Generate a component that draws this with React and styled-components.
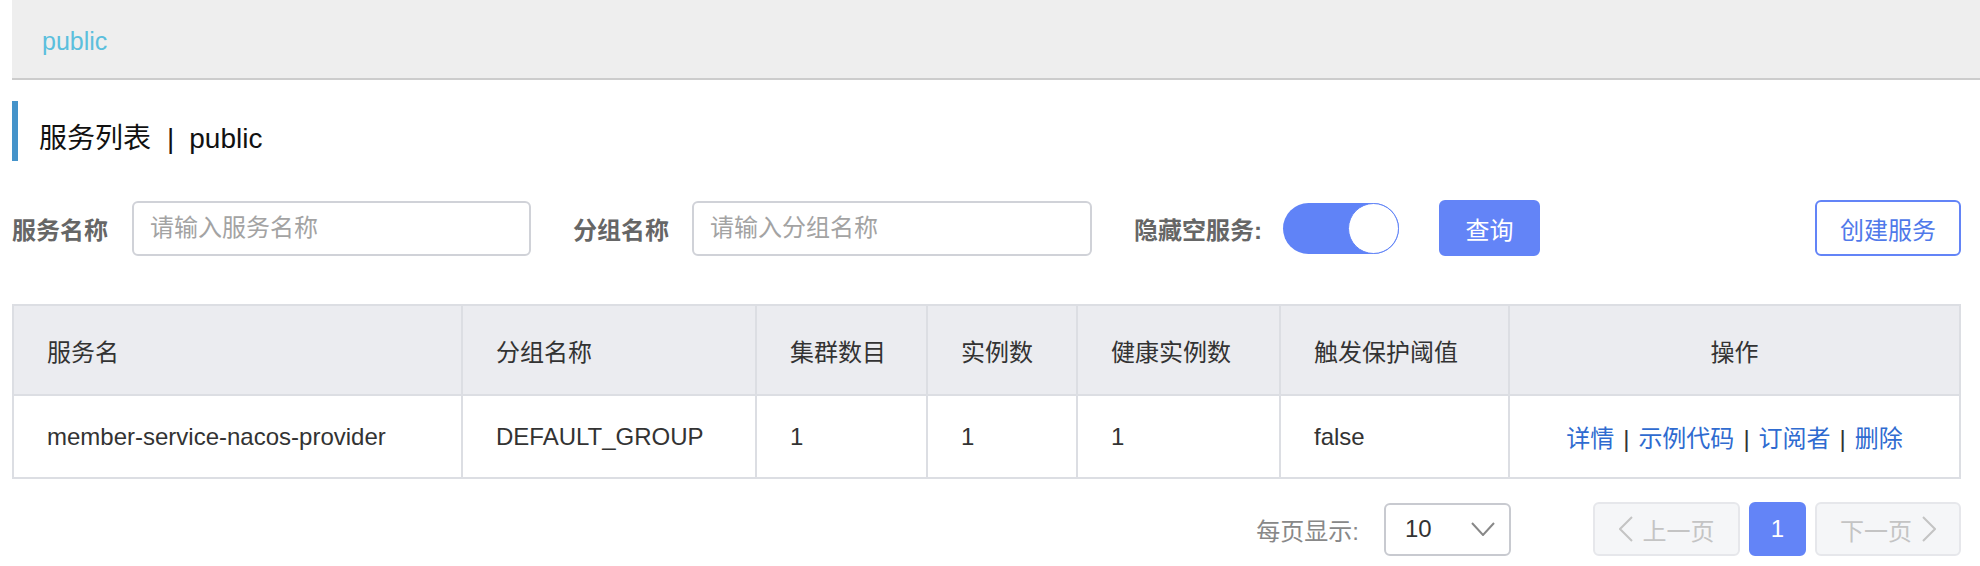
import React, { useState } from "react";
import styled, { createGlobalStyle } from "styled-components";

const GlobalStyle = createGlobalStyle`
  body {
    margin: 0;
    background: #fff;
    font-family: "Liberation Sans", "Noto Sans CJK SC", sans-serif;
    color: #333;
  }
`;

const Page = styled.div`
  padding: 0 19px 0 12px;
`;

const TopBar = styled.div`
  height: 74px;
  margin-right: -19px;
  padding: 4px 0 0 30px;
  display: flex;
  align-items: center;
  background: #eeeeee;
  border-bottom: 2px solid #cccccc;
  font-size: 25px;
  color: #5bbfdd;
`;

const Title = styled.h1`
  margin: 21px 0 0;
  height: 60px;
  box-sizing: border-box;
  padding: 16px 0 0 21px;
  border-left: 6px solid #4493ca;
  font-size: 28px;
  font-weight: normal;
  line-height: 44px;
  color: #111;
`;

const TitleBar = styled.span`
  display: inline-block;
  margin: 0 15px 0 16px;
  color: #111;
`;

const Filters = styled.div`
  margin-top: 39px;
  height: 56px;
  display: flex;
  align-items: center;
`;

const Label = styled.span`
  font-size: 24px;
  font-weight: bold;
  color: #666;
  margin: 0 ${(p) => p.gap || 24}px 0 ${(p) => p.lead || 0}px;
  white-space: nowrap;
`;

const Input = styled.input`
  box-sizing: border-box;
  width: ${(p) => p.w}px;
  height: 55px;
  padding: 0 16px;
  border: 2px solid #d0d2d8;
  border-radius: 6px;
  font: inherit;
  font-size: 24px;
  color: #333;
  outline: none;
  &::placeholder {
    color: #a3a3a3;
  }
`;

const Track = styled.div`
  width: 116px;
  height: 51px;
  border-radius: 26px;
  background: #6083f7;
  display: flex;
  align-items: center;
  justify-content: ${(p) => (p.on ? "flex-end" : "flex-start")};
  cursor: pointer;
`;

const Knob = styled.div`
  width: 49px;
  height: 49px;
  border-radius: 50%;
  background: #fff;
  border: 1px solid #6083f7;
`;

const Button = styled.button`
  box-sizing: border-box;
  height: 56px;
  width: ${(p) => p.w}px;
  margin-left: ${(p) => p.ml};
  border-radius: 6px;
  font: inherit;
  font-size: 24px;
  cursor: pointer;
  background: ${(p) => (p.primary ? "#6384f7" : "#fff")};
  color: ${(p) => (p.primary ? "#fff" : "#5079ea")};
  border: 2px solid #6384f7;
`;

const Table = styled.table`
  margin-top: 48px;
  width: 100%;
  table-layout: fixed;
  border-collapse: collapse;
  border: 2px solid #dcdee3;
  font-size: 24px;
`;

const Th = styled.th`
  height: 88px;
  padding: 0 0 0 33px;
  background: #ebecf0;
  border: 2px solid #dcdee3;
  font-weight: normal;
  color: #333;
  text-align: ${(p) => (p.center ? "center" : "left")};
  ${(p) => p.center && "padding: 0;"}
`;

const Td = styled.td`
  height: 81px;
  padding: 0 0 0 33px;
  border: 2px solid #dcdee3;
  color: #333;
  text-align: ${(p) => (p.center ? "center" : "left")};
  ${(p) => p.center && "padding: 0;"}
`;

const Link = styled.a`
  color: #2f6bd0;
  text-decoration: none;
  cursor: pointer;
`;

const Sep = styled.span`
  color: #333;
  margin: 0 9px;
`;

const Pager = styled.div`
  margin-top: 23px;
  display: flex;
  align-items: center;
  justify-content: flex-end;
  font-size: 24px;
`;

const PagerLabel = styled.span`
  color: #888;
  margin-right: 25px;
`;

const Select = styled.div`
  box-sizing: border-box;
  width: 127px;
  height: 53px;
  padding: 0 14px 0 19px;
  border: 2px solid #c8cad0;
  border-radius: 6px;
  display: flex;
  align-items: center;
  justify-content: space-between;
  color: #333;
  margin-right: 82px;
`;

const PageBtn = styled.div`
  box-sizing: border-box;
  height: 54px;
  width: ${(p) => p.w}px;
  margin-left: ${(p) => p.ml || 0}px;
  border-radius: 6px;
  display: flex;
  align-items: center;
  justify-content: center;
  gap: 10px;
  background: ${(p) => (p.active ? "#6384f7" : "#f5f6f8")};
  border: 2px solid ${(p) => (p.active ? "#6384f7" : "#e6e7eb")};
  color: ${(p) => (p.active ? "#fff" : "#c4c4c4")};
`;

const Chevron = ({ dir, color = "#c4c4c4", w = 14, h = 26 }) => {
  const pts = {
    left: `${w - 1},1 1,${h / 2} ${w - 1},${h - 1}`,
    right: `1,1 ${w - 1},${h / 2} 1,${h - 1}`,
    down: `1,1 ${w / 2},${h - 1} ${w - 1},1`,
  }[dir];
  return (
    <svg width={w} height={h} viewBox={`0 0 ${w} ${h}`}>
      <polyline points={pts} fill="none" stroke={color} strokeWidth="2" />
    </svg>
  );
};

const columns = [
  { title: "服务名", width: 449 },
  { title: "分组名称", width: 294 },
  { title: "集群数目", width: 171 },
  { title: "实例数", width: 150 },
  { title: "健康实例数", width: 203 },
  { title: "触发保护阈值", width: 229 },
  { title: "操作", center: true },
];

const rows = [
  ["member-service-nacos-provider", "DEFAULT_GROUP", "1", "1", "1", "false"],
];

const actions = ["详情", "示例代码", "订阅者", "删除"];

export default function App() {
  const [hideEmpty, setHideEmpty] = useState(true);

  return (
    <Page>
      <GlobalStyle />
      <TopBar>public</TopBar>
      <Title>
        服务列表<TitleBar>|</TitleBar>public
      </Title>

      <Filters>
        <Label gap={24}>服务名称</Label>
        <Input w={399} placeholder="请输入服务名称" />
        <Label lead={42} gap={23}>分组名称</Label>
        <Input w={400} placeholder="请输入分组名称" />
        <Label lead={42} gap={21}>隐藏空服务:</Label>
        <Track on={hideEmpty} onClick={() => setHideEmpty(!hideEmpty)}>
          <Knob />
        </Track>
        <Button primary w={101} ml="40px">查询</Button>
        <Button w={146} ml="auto">创建服务</Button>
      </Filters>

      <Table>
        <colgroup>
          {columns.map((c, i) => (
            <col key={i} style={c.width ? { width: c.width } : undefined} />
          ))}
        </colgroup>
        <thead>
          <tr>
            {columns.map((c) => (
              <Th key={c.title} center={c.center}>{c.title}</Th>
            ))}
          </tr>
        </thead>
        <tbody>
          {rows.map((r) => (
            <tr key={r[0]}>
              {r.map((v, i) => (
                <Td key={i}>{v}</Td>
              ))}
              <Td center>
                {actions.map((a, i) => (
                  <React.Fragment key={a}>
                    {i > 0 && <Sep>|</Sep>}
                    <Link>{a}</Link>
                  </React.Fragment>
                ))}
              </Td>
            </tr>
          ))}
        </tbody>
      </Table>

      <Pager>
        <PagerLabel>每页显示:</PagerLabel>
        <Select>
          <span>10</span>
          <Chevron dir="down" color="#888" w={24} h={14} />
        </Select>
        <PageBtn w={147}>
          <Chevron dir="left" />
          <span>上一页</span>
        </PageBtn>
        <PageBtn active w={57} ml={9}>1</PageBtn>
        <PageBtn w={146} ml={9}>
          <span>下一页</span>
          <Chevron dir="right" />
        </PageBtn>
      </Pager>
    </Page>
  );
}
